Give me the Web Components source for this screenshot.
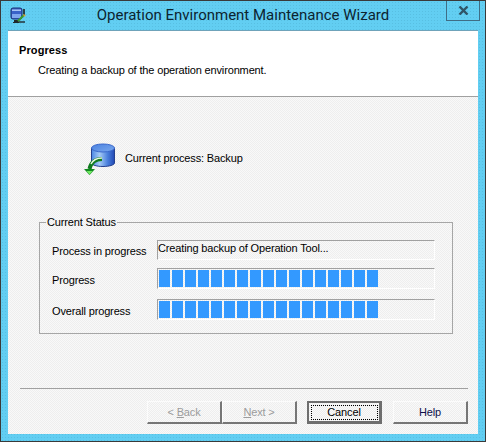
<!DOCTYPE html>
<html>
<head>
<meta charset="utf-8">
<title>Operation Environment Maintenance Wizard</title>
<style>
    html, body { margin: 0; padding: 0; background: #5fcbef; }
</style>
</head>
<body>
<wizard-window>
    <span slot="title">Operation Environment Maintenance Wizard</span>
    <wizard-header>
        <span slot="heading">Progress</span>
        Creating a backup of the operation environment.
    </wizard-header>
    <process-line>Current process: Backup</process-line>
    <status-group>
        <span slot="legend">Current Status</span>
        <status-row label="Process in progress"><text-box>Creating backup of Operation Tool...</text-box></status-row>
        <status-row label="Progress"><chunk-bar chunks="17"></chunk-bar></status-row>
        <status-row label="Overall progress"><chunk-bar chunks="17"></chunk-bar></status-row>
    </status-group>
    <wizard-footer>
        <wiz-button disabled>&lt; <u>B</u>ack</wiz-button>
        <wiz-button disabled><u>N</u>ext &gt;</wiz-button>
        <wiz-button default style="margin-left:10px">Cancel</wiz-button>
        <wiz-button style="margin-left:11px">Help</wiz-button>
    </wizard-footer>
</wizard-window>

<script>
const dither = "repeating-conic-gradient(#eeeeee 0 25%, #f9f9f9 0 50%) 0 0 / 2px 2px";

class WizardWindow extends HTMLElement {
    constructor() {
        super();
        this.attachShadow({ mode: 'open' });
        this.shadowRoot.innerHTML = `
        <style>
            :host {
                display: block;
                box-sizing: border-box;
                width: 486px;
                height: 442px;
                border: 1px solid #3a3a3a;
                background: radial-gradient(#58bfe2 0.6px, #62cef2 0.7px) 0 0 / 3px 3px;
                font: 11px "Liberation Sans", Arial, sans-serif;
                letter-spacing: -0.15px;
                color: #000;
                overflow: hidden;
            }
            .bar { display: grid; grid-template-columns: 1fr auto 1fr; height: 29px; }
            .icon { margin: 6px 0 0 9px; width: 17px; height: 17px; }
            .title {
                font: 15px/30px Roboto, sans-serif;
                letter-spacing: 0;
                color: #0c2430;
                margin-top: -1px;
            }
            .close {
                justify-self: end;
                box-sizing: border-box;
                width: 34px;
                height: 21px;
                margin: -1px 5px 0 0;
                border: 1px solid #3f6d85;
                border-top: none;
                display: flex;
                align-items: center;
                justify-content: center;
            }
            .client {
                box-sizing: border-box;
                width: 470px;
                height: 404px;
                margin-left: 7px;
                background: ${dither};
                border-top: 1px solid #6fa3ba;
                display: flex;
                flex-direction: column;
            }
        </style>
        <div class="bar">
            <svg class="icon" viewBox="0 0 17 17">
                <rect x="1" y="1" width="11" height="11" rx="2" fill="#3a62c8" stroke="#1d2f70" stroke-width="1"/>
                <path d="M2 7 h9 v4 h-9z" fill="#7fa6ee"/>
                <path d="M2 2.5 h9 v1.5 h-9z" fill="#a8c4f5"/>
                <path d="M13 2 h2 v6 h-2z" fill="#2a3f4a"/>
                <path d="M4 13 h4 l1 2 h-5z M3 15 h6 v1 h-6z" fill="#20282c"/>
                <path d="M8 14 L14 8" stroke="#3c9b2e" stroke-width="2"/>
                <path d="M13 7 l3 1 -2 2z" fill="#d8a040"/>
                <path d="M9 15 h6" stroke="#20282c" stroke-width="1.4"/>
            </svg>
            <div class="title"><slot name="title"></slot></div>
            <div class="close">
                <svg width="11" height="9" viewBox="0 0 11 9"><path d="M1.5 0.5 L9.5 8.5 M9.5 0.5 L1.5 8.5" stroke="#2f5568" stroke-width="2.4"/></svg>
            </div>
        </div>
        <div class="client"><slot></slot></div>
        `;
    }
}

class WizardHeader extends HTMLElement {
    constructor() {
        super();
        this.attachShadow({ mode: 'open' });
        this.shadowRoot.innerHTML = `
        <style>
            :host {
                display: block;
                box-sizing: border-box;
                height: 66px;
                background: #fff;
                border-bottom: 1px solid #a0a0a0;
                padding: 12px 0 0 11px;
            }
            .heading { font-weight: bold; letter-spacing: 0.1px; line-height: 15px; height: 20px; }
            .sub { padding-left: 19px; line-height: 15px; }
        </style>
        <div class="heading"><slot name="heading"></slot></div>
        <div class="sub"><slot></slot></div>
        `;
    }
}

class ProcessLine extends HTMLElement {
    constructor() {
        super();
        this.attachShadow({ mode: 'open' });
        this.shadowRoot.innerHTML = `
        <style>
            :host {
                display: flex;
                align-items: center;
                height: 33px;
                margin: 45px 0 40px 76px;
                gap: 8px;
            }
            svg { width: 33px; height: 33px; flex: none; }
            span { padding-bottom: 2px; }
        </style>
        <svg viewBox="0 0 33 33">
            <defs>
                <linearGradient id="side" x1="0" x2="1" y1="0" y2="0">
                    <stop offset="0" stop-color="#4a86e4"/>
                    <stop offset=".35" stop-color="#a4caf6"/>
                    <stop offset=".7" stop-color="#4a80dc"/>
                    <stop offset="1" stop-color="#2148b4"/>
                </linearGradient>
                <linearGradient id="lid" x1="0" x2="1" y1="0" y2="1">
                    <stop offset="0" stop-color="#4a82e0"/>
                    <stop offset="1" stop-color="#7aa8ee"/>
                </linearGradient>
            </defs>
            <path d="M7.5 6 V21 C7.5 23 13 24.5 19 24.5 S30.5 23 30.5 21 V6z" fill="url(#side)" stroke="#24408e" stroke-width="1"/>
            <ellipse cx="19" cy="6" rx="11.5" ry="4" fill="url(#lid)" stroke="#3a68cc" stroke-width="1"/>
            <path d="M18 17 C12 17 7 20 5.5 27" fill="none" stroke="#0f7a1f" stroke-width="4"/>
            <path d="M18 16 C13 16 9 18 7 22" fill="none" stroke="#e6f8e0" stroke-width="1.4"/>
            <path d="M0 27 H11 L5.5 33z" fill="#128a20"/>
            <path d="M2.5 29 H8.5 L5.5 32.5z" fill="#72ea62"/>
        </svg>
        <span><slot></slot></span>
        `;
    }
}

class StatusGroup extends HTMLElement {
    constructor() {
        super();
        this.attachShadow({ mode: 'open' });
        this.shadowRoot.innerHTML = `
        <style>
            :host {
                display: block;
                box-sizing: border-box;
                width: 414px;
                height: 119px;
                margin-left: 31px;
            }
            fieldset {
                box-sizing: border-box;
                height: 119px;
                margin: 0;
                padding: 11px 17px 0 12px;
                border: 1px solid #a6a6a6;
            }
            legend { padding: 0 1px; margin-left: -6px; line-height: 14px; }
        </style>
        <fieldset>
            <legend><slot name="legend"></slot></legend>
            <slot></slot>
        </fieldset>
        `;
    }
}

class StatusRow extends HTMLElement {
    constructor() {
        super();
        this.attachShadow({ mode: 'open' });
        this.shadowRoot.innerHTML = `
        <style>
            :host { display: flex; align-items: flex-start; margin-bottom: 8px; }
            :host(:last-child) { margin-top: 10px; margin-bottom: 0; }
            .label { width: 105px; flex: none; white-space: nowrap; padding-top: 6px; }
            :host(:nth-child(2)) .label { padding-top: 5px; }
            .value { flex: 1; }
        </style>
        <div class="label"></div>
        <div class="value"><slot></slot></div>
        `;
    }
    connectedCallback() {
        this.shadowRoot.querySelector(".label").textContent = this.getAttribute("label");
    }
}

const sunkenBox = `
    box-sizing: border-box;
    display: block;
    height: 20px;
    border: 1px solid #fff;
    border-top-color: #a0a0a0;
    border-left-color: #a0a0a0;
`;

class TextBox extends HTMLElement {
    constructor() {
        super();
        this.attachShadow({ mode: 'open' });
        this.shadowRoot.innerHTML = `
        <style>
            :host { ${sunkenBox} line-height: 14px; white-space: nowrap; }
        </style>
        <slot></slot>
        `;
    }
}

class ChunkBar extends HTMLElement {
    constructor() {
        super();
        this.attachShadow({ mode: 'open' });
        this.shadowRoot.innerHTML = `
        <style>
            :host { ${sunkenBox} height: 21px; padding: 1px; }
            .track { display: flex; gap: 2px; height: 17px; }
            i { width: 11px; background: #3399ff; }
        </style>
        <div class="track"></div>
        `;
    }
    connectedCallback() {
        const track = this.shadowRoot.querySelector(".track");
        const count = Number(this.getAttribute("chunks"));
        for (let n = 0; n < count; n++) {
            track.appendChild(document.createElement("i"));
        }
    }
}

class WizardFooter extends HTMLElement {
    constructor() {
        super();
        this.attachShadow({ mode: 'open' });
        this.shadowRoot.innerHTML = `
        <style>
            :host { display: block; margin: 54px 10px 0 12px; }
            hr { border: none; height: 1px; background: #a0a0a0; margin: 0; }
            .buttons { display: flex; justify-content: flex-end; padding-top: 12px; }
        </style>
        <hr>
        <div class="buttons"><slot></slot></div>
        `;
    }
}

class WizButton extends HTMLElement {
    constructor() {
        super();
        this.attachShadow({ mode: 'open' });
        this.shadowRoot.innerHTML = `
        <style>
            :host {
                display: flex;
                align-items: center;
                justify-content: center;
                box-sizing: border-box;
                width: 75px;
                height: 23px;
                border: 1px solid #fcfcfc;
                border-right: 2px solid #767676;
                border-bottom: 2px solid #767676;
                background: ${dither};
                color: #10104a;
                position: relative;
            }
            :host([disabled]) { color: #9c9c9c; }
            :host([default]) {
                border: 2px solid #6e6e6e;
                border-bottom-width: 3px;
                border-right-width: 3px;
                color: #000;
            }
            .focus { display: none; position: absolute; inset: 2px 1px 1px 2px; border: 1px dotted #000; }
            :host([default]) .focus { display: block; }
        </style>
        <span class="focus"></span>
        <span><slot></slot></span>
        `;
    }
}

customElements.define('wizard-window', WizardWindow);
customElements.define('wizard-header', WizardHeader);
customElements.define('process-line', ProcessLine);
customElements.define('status-group', StatusGroup);
customElements.define('status-row', StatusRow);
customElements.define('text-box', TextBox);
customElements.define('chunk-bar', ChunkBar);
customElements.define('wizard-footer', WizardFooter);
customElements.define('wiz-button', WizButton);
</script>
</body>
</html>
